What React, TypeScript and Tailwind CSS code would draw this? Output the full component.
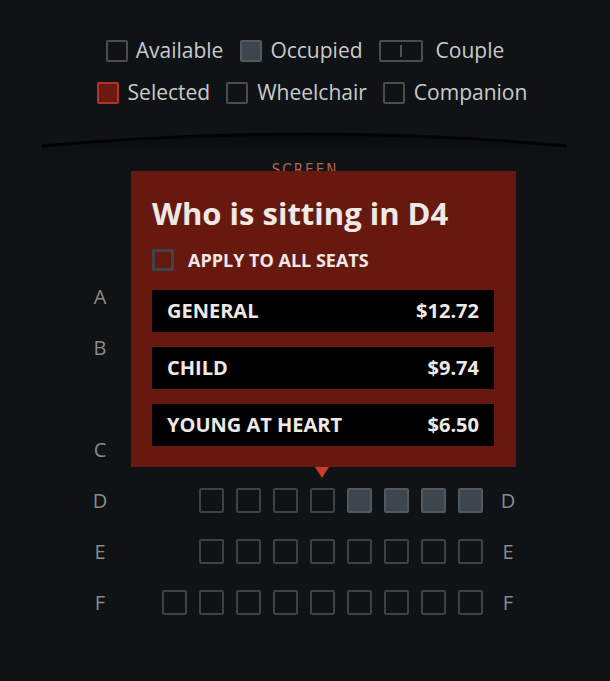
import React from "react";

const LegendBox = ({ cls }: { cls: string }) => (
  <span className={`inline-block w-[22px] h-[22px] rounded-[2px] border-2 ${cls}`} />
);

const Seat = ({ occupied, empty }: { occupied?: boolean; empty?: boolean }) =>
  empty ? (
    <div className="w-[25px] h-[25px]" />
  ) : (
    <div
      className={`w-[25px] h-[25px] rounded-[2px] border-2 ${
        occupied ? "bg-[#3e464d] border-[#52585c]" : "border-[#3f4142] bg-transparent"
      }`}
    />
  );

type Row = { label: string; seats: ("e" | "a" | "o")[] } | null;

const rows: Row[] = [
  { label: "A", seats: ["a", "a", "a", "a", "a", "a", "a", "a", "a"] },
  { label: "B", seats: ["a", "a", "a", "a", "a", "a", "a", "a", "a"] },
  null,
  { label: "C", seats: ["a", "a", "a", "a", "a", "a", "a", "a", "a"] },
  { label: "D", seats: ["e", "a", "a", "a", "a", "o", "o", "o", "o"] },
  { label: "E", seats: ["e", "a", "a", "a", "a", "a", "a", "a", "a"] },
  { label: "F", seats: ["a", "a", "a", "a", "a", "a", "a", "a", "a"] },
];

const prices = [
  ["GENERAL", "$12.72"],
  ["CHILD", "$9.74"],
  ["YOUNG AT HEART", "$6.50"],
];

export default function App() {
  return (
    <div
      className="relative w-[610px] h-[681px] bg-[#101315] overflow-hidden"
      style={{ fontFamily: "'Open Sans', 'Noto Sans', sans-serif" }}
    >
      {/* Legend */}
      <div className="pt-[36px] flex flex-col items-center gap-[13px] text-[21px] leading-[29px] text-[#cacaca]">
        <div className="flex items-center">
          <LegendBox cls="border-[#4a4c4d]" />
          <span className="ml-[8px] mr-[17px]">Available</span>
          <LegendBox cls="border-[#55595c] bg-[#3e464d]" />
          <span className="ml-[8px] mr-[16px]">Occupied</span>
          <span className="relative inline-flex items-center justify-center w-[44px] h-[22px] rounded-[2px] border-2 border-[#4a4c4d]">
            <span className="w-[2px] h-[12px] bg-[#4e5254]" />
          </span>
          <span className="ml-[13px]">Couple</span>
        </div>
        <div className="flex items-center pl-[14px]">
          <LegendBox cls="border-[#b0352a] bg-[#6a1a10]" />
          <span className="ml-[9px] mr-[16px]">Selected</span>
          <LegendBox cls="border-[#4a4c4d]" />
          <span className="ml-[9px] mr-[16px]">Wheelchair</span>
          <LegendBox cls="border-[#4a4c4d]" />
          <span className="ml-[9px]">Companion</span>
        </div>
      </div>

      {/* Screen */}
      <svg width="610" height="40" className="block mt-[13px]" viewBox="0 0 610 40">
        <defs>
          <linearGradient id="scr" x1="0" y1="0" x2="0" y2="1">
            <stop offset="0" stopColor="#07090a" stopOpacity="0.9" />
            <stop offset="1" stopColor="#101315" stopOpacity="0" />
          </linearGradient>
        </defs>
        <path d="M42,26 Q305,2 567,26 L567,44 L42,44 Z" fill="url(#scr)" />
        <path d="M42,26 Q305,2 567,26" fill="none" stroke="#030404" strokeWidth="3" />
      </svg>
      <div
        className="text-center text-[15px] leading-[18px] tracking-[2px] text-[#b3614f] mt-[1px]"
        style={{ fontFamily: "'DejaVu Sans Condensed', 'DejaVu Sans', sans-serif" }}
      >
        SCREEN
      </div>

      {/* Seats */}
      <div className="mt-[105px] flex flex-col gap-[26px] text-[20px] text-[#8a8a8a]">
        {rows.map((r, i) =>
          r === null ? (
            <div key={i} className="h-[25px]" />
          ) : (
            <div key={i} className="flex items-center h-[25px] pl-[80px]">
              <div className="w-[40px] text-center leading-[25px]">{r.label}</div>
              <div className="ml-[42px] flex gap-[12px]">
                {r.seats.map((s, j) => (
                  <Seat key={j} empty={s === "e"} occupied={s === "o"} />
                ))}
              </div>
              <div className="ml-[5px] w-[40px] text-center leading-[25px]">{r.label}</div>
            </div>
          )
        )}
      </div>

      {/* Popup */}
      <div className="absolute left-[131px] top-[171px] w-[385px] h-[296px] bg-[#671910] pl-[21px] pr-[22px] pt-[20px] text-[#efe9e5]">
        <div className="text-[31px] leading-[44px] font-bold">Who is sitting in D4</div>
        <div className="mt-[14px] flex items-center">
          <span className="inline-block w-[22px] h-[22px] border-[3px] border-[#3c4349]" />
          <span className="ml-[14px] text-[18px] font-bold leading-[22px]">APPLY TO ALL SEATS</span>
        </div>
        <div className="mt-[19px] flex flex-col gap-[15px]">
          {prices.map(([n, p]) => (
            <div key={n} className="h-[42px] bg-black flex items-center justify-between px-[15px] text-[20px] font-bold">
              <span>{n}</span>
              <span>{p}</span>
            </div>
          ))}
        </div>
        <div className="absolute left-[184px] top-[296px] w-0 h-0 border-l-[7px] border-r-[7px] border-t-[11px] border-l-transparent border-r-transparent border-t-[#cf3a26]" />
      </div>
    </div>
  );
}
